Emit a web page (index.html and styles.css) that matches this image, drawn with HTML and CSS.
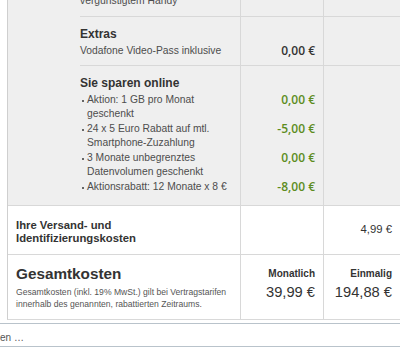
FILE: index.html
```html
<!DOCTYPE html>
<html lang="de">
<head>
<meta charset="utf-8">
<title>Kostenübersicht</title>
<link rel="stylesheet" href="styles.css">
</head>
<body>
<div class="page">
  <div class="costs">
    <div class="grey">
      <div class="indent"></div>
      <div class="groups">
        <div class="group cut">
          <div class="line"><div class="txt">vergünstigtem Handy</div><div class="amt"></div><div class="blank"></div></div>
        </div>
        <div class="group extras">
          <div class="line title"><div class="txt">Extras</div><div class="amt"></div><div class="blank"></div></div>
          <div class="line"><div class="txt">Vodafone Video-Pass inklusive</div><div class="amt">0,00 €</div><div class="blank"></div></div>
        </div>
        <div class="group savings">
          <div class="line title"><div class="txt">Sie sparen online</div><div class="amt"></div><div class="blank"></div></div>
          <div class="line"><div class="txt bullet">Aktion: 1 GB pro Monat geschenkt</div><div class="amt save">0,00 €</div><div class="blank"></div></div>
          <div class="line"><div class="txt bullet">24 x 5 Euro Rabatt auf mtl. Smartphone-Zuzahlung</div><div class="amt save">-5,00 €</div><div class="blank"></div></div>
          <div class="line"><div class="txt bullet">3 Monate unbegrenztes Datenvolumen geschenkt</div><div class="amt save">0,00 €</div><div class="blank"></div></div>
          <div class="line"><div class="txt bullet">Aktionsrabatt: 12 Monate x 8 €</div><div class="amt save">-8,00 €</div><div class="blank"></div></div>
        </div>
      </div>
    </div>
    <div class="row shipping">
      <div class="label">Ihre Versand- und Identifizierungskosten</div>
      <div class="col"></div>
      <div class="col"><span class="fee">4,99 €</span></div>
    </div>
    <div class="row total">
      <div class="label">
        <div class="total-title">Gesamtkosten</div>
        <div class="note">Gesamtkosten (inkl. 19% MwSt.) gilt bei Vertragstarifen innerhalb des genannten, rabattierten Zeitraums.</div>
      </div>
      <div class="col">
        <div class="period">Monatlich</div>
        <div class="sum">39,99 €</div>
      </div>
      <div class="col">
        <div class="period">Einmalig</div>
        <div class="sum">194,88 €</div>
      </div>
    </div>
  </div>
  <div class="search">en …</div>
</div>
</body>
</html>
```

FILE: styles.css
```css
html, body {
  margin: 0;
  padding: 0;
  background: #ffffff;
}

body {
  font-family: "Liberation Sans", Arial, sans-serif;
  color: #333333;
  overflow: hidden;
}

.page {
  margin-top: -6px;
}

.costs {
  margin-left: 7px;
  border-left: 1px solid #cfcfcf;
  border-bottom: 1px solid #d9d9d9;
}

.grey {
  display: flex;
  background: #efefef;
}

.indent {
  width: 72px;
  flex: none;
}

.groups {
  flex: 1;
}

.group {
  border-top: 1px solid #d8d8d8;
}

.group.cut {
  border-top: 0;
}

.line {
  display: grid;
  grid-template-columns: 160px 83px 1fr;
}

.line > div {
  padding-bottom: 1px;
}

.group > .line:first-child > div {
  padding-top: 10px;
}

.group.cut > .line:first-child > div {
  padding-top: 0;
}

.group.cut > .line:last-child > div {
  padding-bottom: 8px;
}

.group.extras > .line:last-child > div {
  padding-bottom: 7px;
}

.group.savings > .line:last-child > div {
  padding-bottom: 11px;
}

.line.title > div {
  padding-bottom: 3px;
}

.txt {
  font-size: 10.3px;
  line-height: 14px;
  color: #4d4d4d;
  padding-right: 4px;
}

.title .txt {
  font-size: 12px;
  font-weight: bold;
  color: #333333;
}

.bullet {
  position: relative;
  padding-left: 7px;
}

.bullet::before {
  content: "";
  position: absolute;
  left: 2px;
  top: 7px;
  width: 2px;
  height: 2px;
  background: #666666;
}

.amt {
  border-left: 1px solid #d8d8d8;
  padding-right: 8px;
  text-align: right;
  font-family: "Open Sans", sans-serif;
  font-weight: 600;
  font-size: 12px;
  line-height: 14px;
  color: #333333;
}

.amt.save {
  color: #5d8c1e;
}

.blank {
  border-left: 1px solid #d8d8d8;
}

.row {
  display: grid;
  grid-template-columns: 232px 83px 1fr;
  background: #ffffff;
  border-top: 1px solid #d8d8d8;
}

.row .label {
  padding-left: 8px;
  padding-right: 6px;
}

.row .col {
  border-left: 1px solid #d8d8d8;
  padding-right: 8px;
  text-align: right;
}

.shipping > div {
  padding-top: 13px;
  padding-bottom: 9px;
}

.shipping .label {
  font-size: 11.3px;
  font-weight: bold;
  line-height: 13px;
  color: #333333;
}

.fee {
  font-size: 11.3px;
  line-height: 13px;
  color: #333333;
}

.total > div {
  padding-top: 10px;
  padding-bottom: 9px;
}

.total-title {
  font-size: 15.3px;
  font-weight: bold;
  line-height: 18px;
  color: #333333;
}

.note {
  margin-top: 3px;
  font-size: 8.6px;
  line-height: 12px;
  color: #555555;
}

.period {
  font-size: 10px;
  font-weight: bold;
  line-height: 18px;
  color: #333333;
}

.sum {
  font-size: 14.7px;
  line-height: 19px;
  color: #333333;
}

.search {
  margin-top: 3px;
  border-top: 1px solid #b9c3cb;
  border-bottom: 1px solid #b9c3cb;
  padding-top: 5px;
  height: 17px;
  line-height: 17px;
  font-size: 10px;
  color: #555555;
  background: #ffffff;
}
```
